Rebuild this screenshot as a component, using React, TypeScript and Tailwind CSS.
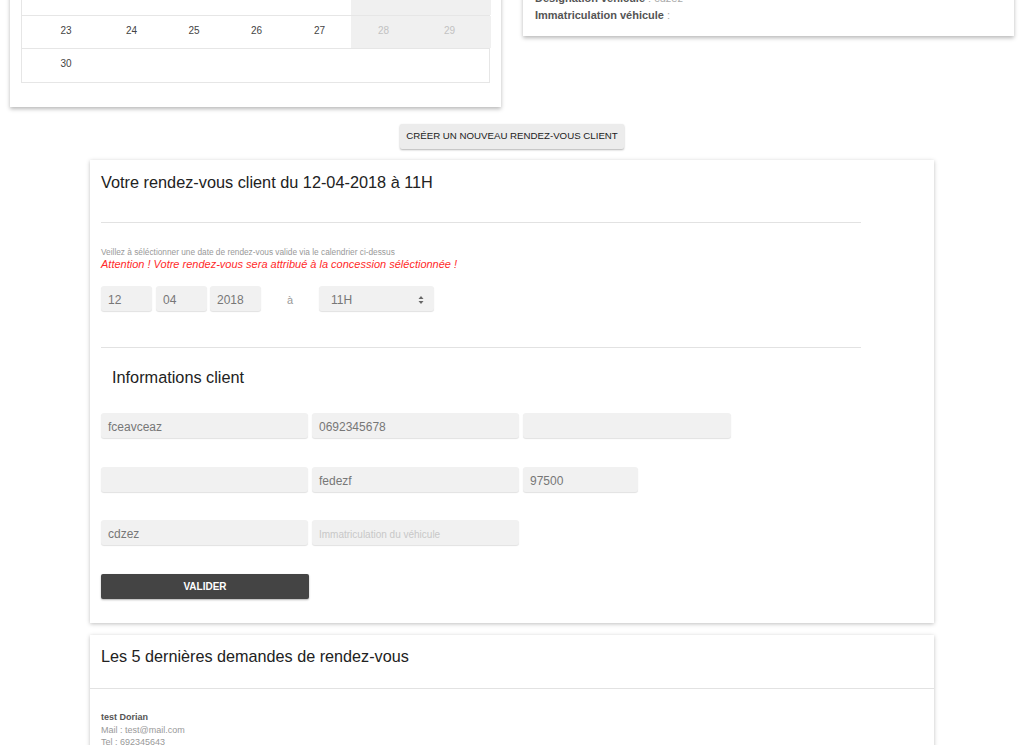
import React from "react";

const cols = "grid grid-cols-[78px_63px_62px_63px_63px_65px_75px]";

function Input({ w, value, placeholder }: { w: string; value?: string; placeholder?: string }) {
  return (
    <div
      className={`${w} h-[25px] rounded-[3px] bg-[#f1f1f1] shadow-[0_1px_1px_rgba(0,0,0,0.12)] flex items-center pl-[7px] pt-[3px] ${
        value ? "text-[12px] text-[#777]" : "text-[10px] text-[#c8c8c8]"
      }`}
    >
      {value ?? placeholder ?? ""}
    </div>
  );
}

export default function App() {
  const row2 = ["23", "24", "25", "26", "27", "28", "29"];
  return (
    <div className="h-[745px] overflow-hidden bg-white font-['Liberation_Sans',Arial,sans-serif]">
      <div className="-mt-[19px]">
        {/* Top cards */}
        <div className="flex items-start gap-[22px] px-[10px]">
          <div className="w-[491px] bg-white shadow-[0_2px_4px_rgba(0,0,0,0.28)] px-[11px] pb-[24px]">
            <div className="border border-[#e6e6e6]">
              <div className={`${cols} h-[33px]`}>
                {[0, 1, 2, 3, 4, 5, 6].map((i) => (
                  <div key={i} className={i >= 5 ? "bg-[#f0f0f0]" : ""} />
                ))}
              </div>
              <div className={`${cols} h-[33px] border-t border-[#e6e6e6] text-[10px]`}>
                {row2.map((d, i) => (
                  <div
                    key={d}
                    className={`flex items-center justify-center pb-[4px] ${i === 0 ? "pl-[10px]" : ""} ${
                      i === 6 ? "pr-[8px]" : ""
                    } ${i >= 5 ? "bg-[#f0f0f0] text-[#c2c2c2]" : "text-[#444]"}`}
                  >
                    {d}
                  </div>
                ))}
              </div>
              <div className={`${cols} h-[34px] border-t border-[#e6e6e6] text-[10px]`}>
                <div className="flex items-center justify-center pl-[10px] pb-[5px] text-[#444]">30</div>
              </div>
            </div>
          </div>
          <div className="w-[491px] bg-white shadow-[0_2px_4px_rgba(0,0,0,0.28)] px-[12px] pt-[9px] pb-[12px] text-[11px] leading-[17px]">
            <div>
              <span className="font-bold text-[#555]">Designation véhicule</span>
              <span className="text-[#aaa]"> : cdzez</span>
            </div>
            <div>
              <span className="font-bold text-[#555]">Immatriculation véhicule</span>
              <span className="text-[#aaa]"> :</span>
            </div>
          </div>
        </div>

        {/* Create button */}
        <div className="flex justify-center mt-[17px]">
          <div className="w-[224px] h-[25px] bg-[#ececec] shadow-[0_1px_2px_rgba(0,0,0,0.3)] rounded-[2px] flex items-center justify-center text-[9.7px] text-[#222] uppercase">
            Créer un nouveau rendez-vous client
          </div>
        </div>

        {/* Main card */}
        <div className="w-[844px] mx-auto mt-[11px] bg-white shadow-[0_1px_4px_rgba(0,0,0,0.25)] pl-[11px] pt-[10px] pb-[24px]">
          <div className="text-[16.3px] leading-[24px] text-[#222]">
            Votre rendez-vous client du 12-04-2018 à 11H
          </div>
          <div className="w-[760px] h-px bg-[#e2e2e2] mt-[28px]" />
          <div className="mt-[24px] text-[8.3px] leading-[10px] text-[#999]">
            Veillez à séléctionner une date de rendez-vous valide via le calendrier ci-dessus
          </div>
          <div className="text-[11px] leading-[14px] italic text-[#ff2a2a]">
            Attention ! Votre rendez-vous sera attribué à la concession séléctionnée !
          </div>
          <div className="mt-[15px] flex items-center">
            <Input w="w-[51px]" value="12" />
            <div className="w-[4px]" />
            <Input w="w-[51px]" value="04" />
            <div className="w-[3px]" />
            <Input w="w-[51px]" value="2018" />
            <div className="w-[58px] text-center text-[11px] text-[#999] pt-[4px]">à</div>
            <div className="w-[115px] h-[25px] rounded-[3px] bg-[#f1f1f1] shadow-[0_1px_1px_rgba(0,0,0,0.12)] flex items-center justify-between pl-[12px] pr-[10px] pt-[2px] text-[12px] text-[#777]">
              <span>11H</span>
              <svg width="6" height="10" viewBox="0 0 6 10">
                <path d="M3 1 L5.5 4 L0.5 4 Z" fill="#666" />
                <path d="M3 9 L5.5 6 L0.5 6 Z" fill="#666" />
              </svg>
            </div>
          </div>
          <div className="w-[760px] h-px bg-[#e2e2e2] mt-[36px]" />
          <div className="mt-[18px] ml-[11px] text-[16.3px] leading-[22px] text-[#222]">
            Informations client
          </div>
          <div className="mt-[25px] flex gap-[4px]">
            <Input w="w-[207px]" value="fceavceaz" />
            <Input w="w-[207px]" value="0692345678" />
            <Input w="w-[208px]" />
          </div>
          <div className="mt-[29px] flex gap-[4px]">
            <Input w="w-[207px]" />
            <Input w="w-[207px]" value="fedezf" />
            <Input w="w-[115px]" value="97500" />
          </div>
          <div className="mt-[28px] flex gap-[4px]">
            <Input w="w-[207px]" value="cdzez" />
            <Input w="w-[207px]" placeholder="Immatriculation du véhicule" />
          </div>
          <div className="mt-[29px] w-[208px] h-[25px] bg-[#444] rounded-[2px] shadow-[0_1px_2px_rgba(0,0,0,0.3)] flex items-center justify-center text-[10px] font-bold text-white">
            VALIDER
          </div>
        </div>

        {/* Second card */}
        <div className="w-[844px] mx-auto mt-[12px] bg-white shadow-[0_1px_4px_rgba(0,0,0,0.25)] pt-[10px] pb-[20px]">
          <div className="pl-[11px] text-[16.2px] leading-[22px] text-[#222]">
            Les 5 dernières demandes de rendez-vous
          </div>
          <div className="h-px bg-[#e2e2e2] mt-[21px]" />
          <div className="pl-[11px] mt-[22px] text-[9px] leading-[12.5px]">
            <div className="font-bold text-[#555]">test Dorian</div>
            <div className="text-[#999]">Mail : test@mail.com</div>
            <div className="text-[#999]">Tel : 692345643</div>
          </div>
        </div>
      </div>
    </div>
  );
}
